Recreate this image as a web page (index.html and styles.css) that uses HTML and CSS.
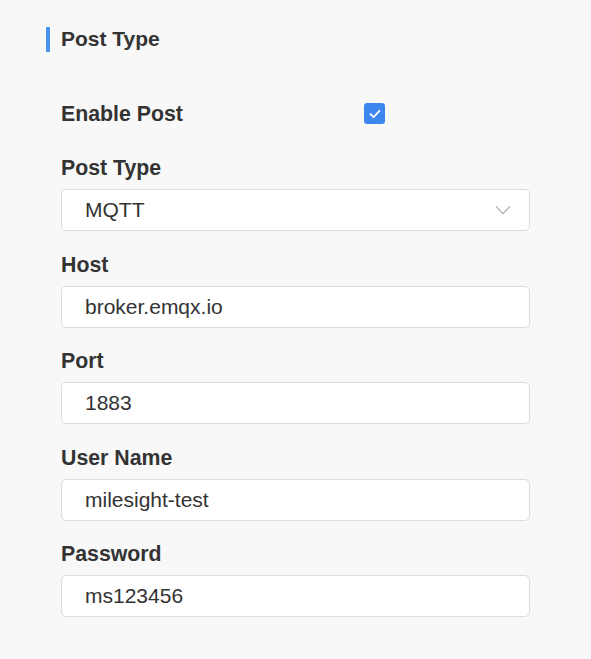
FILE: index.html
```html
<!DOCTYPE html>
<html>
<head>
<meta charset="utf-8">
<link rel="stylesheet" href="styles.css">
</head>
<body>
<div class="page">
  <div class="section-title">Post Type</div>
  <div class="form">
    <div class="row-check">
      <span class="label">Enable Post</span>
      <span class="checkbox">
        <svg width="14" height="14" viewBox="0 0 14 14"><path d="M2.5 7.2 L5.6 10.2 L11.5 3.8" fill="none" stroke="#fff" stroke-width="1.8" stroke-linecap="round" stroke-linejoin="round"/></svg>
      </span>
    </div>
    <div class="field">
      <div class="label">Post Type</div>
      <div class="input select">
        <span>MQTT</span>
        <svg class="chev" width="16" height="10" viewBox="0 0 16 10"><path d="M1 1.5 L8 8.5 L15 1.5" fill="none" stroke="#b3b3b3" stroke-width="1.3"/></svg>
      </div>
    </div>
    <div class="field">
      <div class="label">Host</div>
      <div class="input">broker.emqx.io</div>
    </div>
    <div class="field">
      <div class="label">Port</div>
      <div class="input">1883</div>
    </div>
    <div class="field">
      <div class="label">User Name</div>
      <div class="input">milesight-test</div>
    </div>
    <div class="field">
      <div class="label">Password</div>
      <div class="input">ms123456</div>
    </div>
  </div>
</div>
</body>
</html>
```
FILE: styles.css
```css
html, body {
  margin: 0;
  padding: 0;
  background: #f8f8f8;
}
body {
  font-family: "Liberation Sans", Arial, sans-serif;
  color: #333;
}
.page {
  padding: 27px 0 0 46px;
}
.section-title {
  border-left: 4px solid #4a95ee;
  padding-left: 11px;
  height: 25px;
  line-height: 24px;
  font-size: 21px;
  font-weight: bold;
  color: #333;
}
.form {
  margin-left: 15px;
  width: 469px;
  display: flex;
  flex-direction: column;
}
.row-check {
  margin-top: 49px;
  height: 25px;
  display: flex;
  align-items: center;
}
.label {
  font-size: 21.3px;
  font-weight: bold;
  line-height: 24px;
  color: #333;
}
.row-check .label {
  width: 303px;
}
.checkbox {
  width: 21px;
  height: 21px;
  border-radius: 3px;
  background: #3d86ef;
  display: flex;
  align-items: center;
  justify-content: center;
}
.field {
  display: flex;
  flex-direction: column;
  gap: 9px;
  margin-top: 21.5px;
}
.row-check + .field {
  margin-top: 30px;
}
.input {
  box-sizing: border-box;
  height: 42px;
  background: #fff;
  border: 1px solid #dcdcdf;
  border-radius: 5px;
  padding-left: 23px;
  font-size: 21px;
  line-height: 40px;
  color: #333;
}
.select {
  display: flex;
  align-items: center;
  justify-content: space-between;
  padding-right: 18px;
}
.chev {
  display: block;
}
```
